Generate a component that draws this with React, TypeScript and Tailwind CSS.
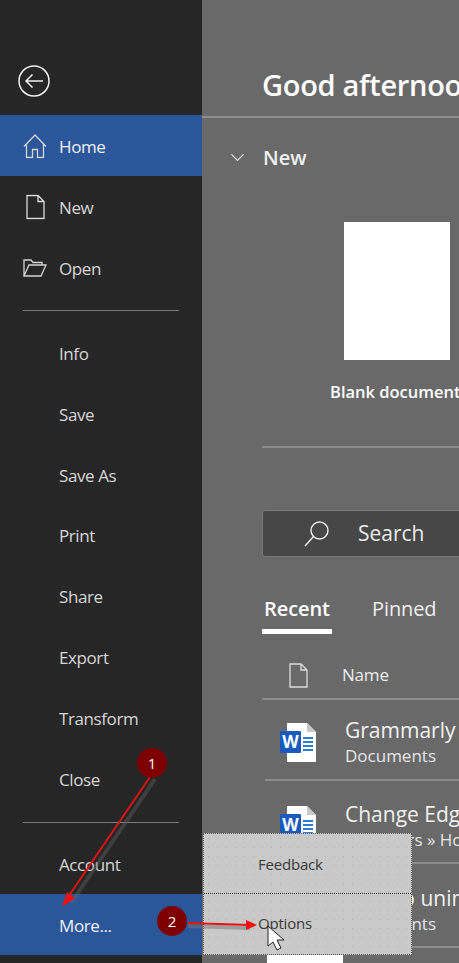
import React from 'react';
import { ChevronDown } from 'lucide-react';

const HomeIcon: React.FC = () => (
    <svg width="24" height="25" viewBox="0 0 24 25" fill="none" stroke="#d4d4d4" strokeWidth="1.3">
        <path d="M1 13L12 1.5 23 13M3.5 11v13h6v-8h5v8h6V11" />
    </svg>
);

const DocIcon: React.FC = () => (
    <svg width="19" height="25" viewBox="0 0 19 25" fill="none" stroke="#dcdcdc" strokeWidth="1.3">
        <path d="M1 1h11l6 6v17H1zM12 1v6h6" />
    </svg>
);

const FolderIcon: React.FC = () => (
    <svg width="24" height="18" viewBox="0 0 24 18" fill="none" stroke="#d4d4d4" strokeWidth="1.3">
        <path d="M1 17V1h7l2 2.5h9V6M1 17h17l5-11H6z" />
    </svg>
);

const NavItem: React.FC<{ label: string; icon?: React.ReactNode; active?: boolean; h?: string; pt?: string }> = ({ label, icon, active, h = 'h-[61px]', pt = '' }) => (
    <div className={`${h} ${pt} flex items-center relative pl-[59px] text-[17px] tracking-[-0.4px] ${active ? 'bg-[#2b579a] text-[#f0f0f0]' : 'text-[#d6d6d6]'}`}>
        {icon && <span className="absolute left-[23px] top-1/2 -translate-y-1/2 flex">{icon}</span>}
        {label}
    </div>
);

const WordIcon: React.FC = () => (
    <svg width="38" height="40" viewBox="0 0 38 40" className="shrink-0">
        <path d="M8 0h20l9 9v30H8z" fill="#fff" />
        <path d="M28 0v9h9z" fill="#c8c8c8" />
        <rect x="24" y="14" width="10" height="2" fill="#2b7cd3" />
        <rect x="24" y="18" width="10" height="2" fill="#2b7cd3" />
        <rect x="24" y="22" width="10" height="2" fill="#2b7cd3" />
        <rect x="24" y="26" width="10" height="2" fill="#2b7cd3" />
        <rect x="1" y="8" width="21" height="22" rx="1" fill="#185abd" />
        <text x="11.5" y="25" textAnchor="middle" fontSize="17" fontWeight="700" fill="#fff" fontFamily="Open Sans">W</text>
    </svg>
);

const RecentRow: React.FC<{ title: string; sub: string; h: string; iconTop: string; textTop: string }> = ({ title, sub, h, iconTop, textTop }) => (
    <div className={`${h} flex border-b-2 border-[#8c8c8c] ml-[3px] whitespace-nowrap`}>
        <div className={`w-[80px] shrink-0 pl-[14px] ${iconTop}`}>
            <WordIcon />
        </div>
        <div className={textTop}>
            <div className="text-[21px] leading-[28px] text-[#f2f2f2]">{title}</div>
            <div className="text-[17px] leading-[24px] text-[#e6e6e6]">{sub}</div>
        </div>
    </div>
);

const App: React.FC = () => {
    return (
        <div className="relative w-[459px] h-[963px] overflow-hidden flex bg-[#262626] font-['Open_Sans',sans-serif]">
            <aside className="w-[202px] shrink-0 flex flex-col">
                <div className="h-[115px] pl-[18px] pt-[65px]">
                    <svg width="32" height="32" viewBox="0 0 32 32" fill="none" stroke="#f0f0f0" strokeWidth="1.5">
                        <circle cx="16" cy="16" r="15" />
                        <path d="M25 16H8M14.5 9.5L8 16l6.5 6.5" />
                    </svg>
                </div>
                <NavItem label="Home" active pt="pt-[2px]" icon={<HomeIcon />} />
                <NavItem label="New" pt="pt-[2px]" icon={<span className="ml-[3px] flex"><DocIcon /></span>} />
                <NavItem label="Open" pt="pt-[2px]" icon={<FolderIcon />} />
                <div className="h-[25px] pt-[12px] px-[23px]"><div className="h-[1px] bg-[#7d7d7d]" /></div>
                <NavItem label="Info" />
                <NavItem label="Save" />
                <NavItem label="Save As" />
                <NavItem label="Print" h="h-[60px]" />
                <NavItem label="Share" />
                <NavItem label="Export" />
                <NavItem label="Transform" />
                <NavItem label="Close" />
                <div className="h-[24px] pt-[12px] px-[23px]"><div className="h-[1px] bg-[#7d7d7d]" /></div>
                <NavItem label="Account" h="h-[60px]" pt="pt-[1px]" />
                <NavItem label="More..." active pt="pt-[2px]" />
            </aside>

            <main className="flex-1 min-w-0 bg-[#696969] text-white overflow-hidden">
                <div className="h-[118px] border-b-2 border-[#8c8c8c] pl-[60px] pt-[65px] text-[29px] leading-[40px] font-semibold tracking-[-0.3px] whitespace-nowrap">
                    Good afternoon
                </div>
                <div className="h-[80px] flex items-center pl-[24px] pb-[1px]">
                    <ChevronDown size={23} strokeWidth={1.3} className="text-[#e0e0e0]" />
                    <span className="ml-[14px] text-[20px] font-semibold text-[#f0f0f0]">New</span>
                </div>
                <div className="ml-[142px] mt-[24px] w-[106px] h-[138px] bg-white" />
                <div className="ml-[128px] mt-[20px] h-[24px] flex items-center text-[16.5px] font-semibold whitespace-nowrap">
                    Blank document
                </div>
                <div className="ml-[60px] mt-[42px] border-t-2 border-[#8c8c8c]" />
                <div className="ml-[60px] mt-[62px] h-[47px] w-[260px] rounded-[3px] bg-[#474747] border border-[#7a7a7a] flex items-center pl-[41px] pt-[1px]">
                    <svg width="25" height="26" viewBox="0 0 25 26" fill="none" stroke="#f0f0f0" strokeWidth="1.4">
                        <circle cx="15.5" cy="9.5" r="8.5" />
                        <path d="M9.5 15.5L1 25" />
                    </svg>
                    <span className="ml-[29px] text-[21px] text-[#ececec]">Search</span>
                </div>
                <div className="ml-[60px] mt-[34px] flex h-[44px] text-[20px] tracking-[-0.1px]">
                    <div className="w-[70px] border-b-[5px] border-white font-semibold text-center h-[43px] leading-[36px]">Recent</div>
                    <div className="ml-[40px] leading-[36px] text-[#f0f0f0]">Pinned</div>
                </div>
                <div className="ml-[60px] h-[65px] flex items-center border-b-2 border-[#8c8c8c] text-[#ececec] pt-[17px]">
                    <span className="ml-[27px] flex"><DocIcon /></span>
                    <span className="ml-[34px] text-[17px] tracking-[-0.2px]">Name</span>
                </div>
                <div className="ml-[60px]">
                    <RecentRow title="Grammarly for Word" sub="Documents" h="h-[81px]" iconTop="pt-[23px]" textTop="pt-[16px]" />
                    <RecentRow title="Change Edge default" sub="C: » Users » Home" h="h-[83px]" iconTop="pt-[25px]" textTop="pt-[19px]" />
                    <RecentRow title="How to uninstall" sub="Documents" h="h-[84px]" iconTop="pt-[25px]" textTop="pt-[20px]" />
                    <div className="ml-[5px] mt-[7px] w-[76px] h-[20px] bg-white" />
                </div>
            </main>

            {/* popup menu */}
            <div className="absolute left-[203px] top-[833px] w-[209px] h-[122px] flex flex-col bg-[#c9c9c9] bg-[radial-gradient(#b4b4b4_0.5px,transparent_0.7px)] bg-[length:9px_9px] border border-dotted border-[#555555] text-[#3a3a3a] text-[15px] tracking-[-0.2px]">
                <div className="h-[60px] flex items-center pl-[54px] pt-[2px] border-b border-dotted border-[#333333]">Feedback</div>
                <div className="flex-1 flex items-center pl-[54px] pb-[2px]">Options</div>
            </div>

            {/* annotations */}
            <svg width="459" height="963" className="absolute inset-0 pointer-events-none">
                <line x1="155" y1="779" x2="71" y2="903" stroke="#666666" strokeWidth="4" opacity="0.4" />
                <line x1="150" y1="777" x2="66" y2="900" stroke="#f01010" strokeWidth="1.8" />
                <path d="M62 907l5-15 8 6z" fill="#f01010" />
                <line x1="188" y1="926" x2="250" y2="928" stroke="#777777" strokeWidth="4" opacity="0.5" />
                <line x1="188" y1="923" x2="250" y2="925" stroke="#f01010" strokeWidth="1.8" />
                <path d="M257 925l-11-5v10z" fill="#f01010" />
                <path d="M268 926v20l5-4 4 8 4-2-4-8h7z" fill="#ffffff" stroke="#222222" strokeWidth="1" />
            </svg>
            <div className="absolute left-[137px] top-[748px] w-[30px] h-[30px] rounded-full bg-[#7f0000] text-white text-[15px] flex items-center justify-center">1</div>
            <div className="absolute left-[157px] top-[906px] w-[30px] h-[30px] rounded-full bg-[#7f0000] text-white text-[15px] flex items-center justify-center">2</div>
        </div>
    );
};

export default App;
